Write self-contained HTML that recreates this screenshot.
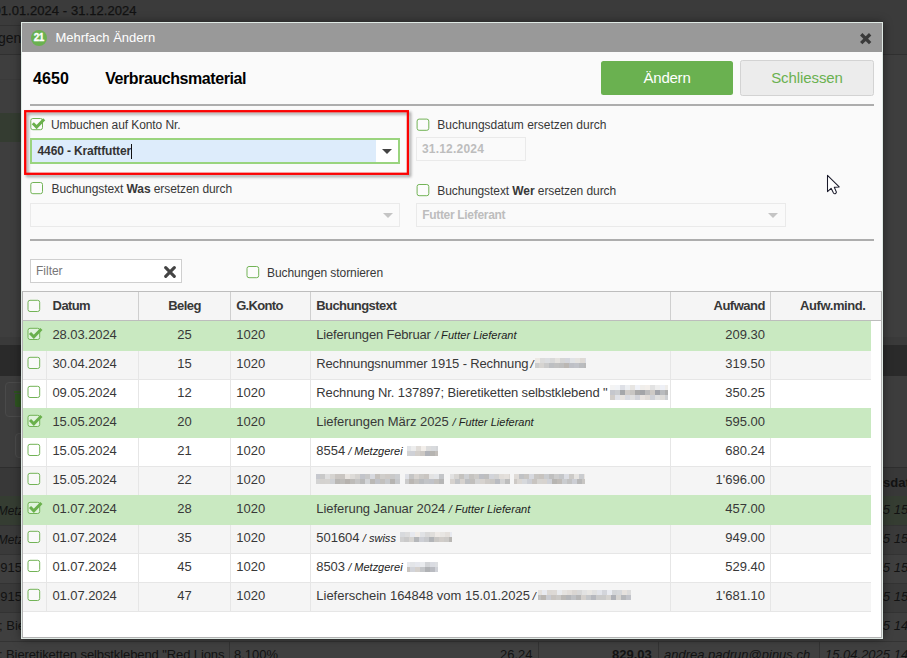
<!DOCTYPE html>
<html lang="de">
<head>
<meta charset="utf-8">
<title>Mehrfach Ändern</title>
<style>
*{box-sizing:border-box;margin:0;padding:0}
html,body{width:907px;height:658px;overflow:hidden}
body{position:relative;background:#3e3e3e;font-family:"Liberation Sans",Arial,sans-serif;font-size:13px;color:#333}
.abs{position:absolute}
/* ---------- darkened page behind ---------- */
.bg{position:absolute;left:0;top:0;width:907px;height:658px;background:#3e3e3e;overflow:hidden;color:#121212}
.bg .band{position:absolute;left:0;width:907px}
.bg .t{position:absolute;white-space:nowrap}
/* ---------- dialog ---------- */
.dlg{position:absolute;left:21px;top:22px;width:862px;height:617px;background:#fafafa;border:1px solid #dfe9e4;box-shadow:0 0 9px 0 rgba(0,0,0,.42)}
.tbar{position:absolute;left:0;top:0;width:860px;height:29px;background:#999}
.tbar .ico{position:absolute;left:9px;top:7px;width:16px;height:16px;border-radius:50%;background:#6ab150;color:#fff;font-weight:bold;font-size:10px;line-height:16px;text-align:center;letter-spacing:-.6px;text-indent:-.6px;-webkit-text-stroke:.3px #fff}
.tbar .ttl{position:absolute;left:33.4px;top:0;line-height:29px;font-size:13px;color:#fff}
.tbar .x{position:absolute;left:836.5px;top:8.5px;width:13.4px;height:13.4px}
.h1{position:absolute;top:46px;font-size:16px;font-weight:bold;color:#111;line-height:20px;white-space:nowrap}
.btn{position:absolute;top:38px;height:35px;width:133px;border-radius:2.5px;font-size:15px;line-height:34px;text-align:center}
.btn.g{left:579px;width:132px;height:34px;background:#6ab150;color:#fff}
.btn.w{left:718px;top:37px;width:134px;height:36px;background:#ececec;color:#6ab150;border:1px solid #d3d3d3}
.hr{position:absolute;left:8px;width:844px;height:2px;background:#adadad}
.cbs{position:absolute;overflow:visible}
.lbl{position:absolute;line-height:16px;white-space:nowrap;color:#383838}
.red{position:absolute;left:2px;top:87px;width:385px;height:65px;filter:drop-shadow(2px 2px 1.6px rgba(0,0,0,.4))}
.inp{position:absolute;height:26px;border:1px solid #eaeaea;background:#fafafa;color:#bdbdbd;font-weight:bold;line-height:24px;padding-left:5px;white-space:nowrap}
.arr{position:absolute;width:0;height:0;border-left:5px solid transparent;border-right:5px solid transparent;border-top:5px solid #c4c4c4}
/* ---------- table ---------- */
.thead{position:absolute;left:0;top:268px;width:860px;height:30px;background:#f5f5f5;border-top:1px solid #bdbdbd;border-bottom:1px solid #bdbdbd;border-left:1px solid #b2b2b2;border-right:1px solid #b2b2b2;font-weight:bold}
.tframe{position:absolute;left:0;top:268px;width:860px;height:347px;background:#fff;border:1px solid #b2b2b2}
.thead .c{position:absolute;top:0;height:28px;line-height:27px;border-right:1px solid #cfcfcf;white-space:nowrap}
.rows{z-index:0;position:absolute;left:1px;top:298px;width:848px;height:291px;background:#fff}
.r{position:absolute;left:0;width:848px;height:29px;border-top:1px solid #e6e6e6;line-height:28px;white-space:nowrap}
.r.alt{background:#f5f5f5}
.r.sel{background:#c9e9c1;border-top:0;height:30px;z-index:2}
.rend{position:absolute;left:0;top:290px;width:848px;height:1px;background:#e6e6e6}
.r .c{position:absolute;top:0;height:28px;overflow:hidden}
.vl{position:absolute;top:0;width:1px;height:291px;background:#e6e6e6;z-index:1}
.r.sel .m{position:absolute;top:0;width:1px;height:29px;background:#c9e9c1}
i.s{font-size:11px;color:#222}
.blur{position:absolute;height:10px;background:#cfcfcf;filter:blur(1px);opacity:.85}
</style>
</head>
<body>
<div class="bg" id="bg">
  <div class="band" style="top:0;height:54px;background:#3b3b3b"></div>
  <div class="band" style="top:25px;height:1px;background:#313131;width:30px"></div>
  <div class="band" style="top:54px;height:1px;background:#303030"></div>
  <div class="band" style="top:79px;height:1px;background:#3a3a3a;width:30px"></div>
  <div class="band" style="top:113px;height:29px;background:#343c31;width:30px"></div>
  <div class="band" style="top:337px;height:8px;background:#3a3a3a"></div>
  <div class="band" style="top:345px;height:31px;background:#2a2a2a"></div>
  <div class="band" style="top:376px;height:91px;background:#3d3d3d"></div>
  <div class="abs" style="left:5px;top:382px;width:40px;height:35px;border:1px solid #4a4a4a;border-radius:4px;background:#3f3f3f"></div>
  <div class="abs" style="left:15px;top:394px;width:11px;height:13px;background:#2e5420;border-radius:0 0 2px 2px"></div><div class="abs" style="left:14px;top:391px;width:13px;height:2px;background:#2e5420"></div>
  <div class="abs" style="left:15px;top:433px;width:40px;height:25px;border:1px solid #4a4a4a;border-radius:4px;background:#404040"></div>
  <div class="band" style="top:467px;height:1px;background:#2e2e2e"></div>
  <div class="band" style="top:468px;height:28px;background:#383838"></div>
  <div class="band" style="top:496px;height:29px;background:#353d32"></div>
  <div class="band" style="top:525px;height:29px;background:#3a3a3a"></div>
  <div class="band" style="top:554px;height:29px;background:#3f3f3f"></div>
  <div class="band" style="top:583px;height:29px;background:#3a3a3a"></div>
  <div class="band" style="top:612px;height:29px;background:#3f3f3f"></div>
  <div class="band" style="top:641px;height:17px;background:#404040"></div>
  <div class="band" style="top:525px;height:1px;background:#333"></div>
  <div class="band" style="top:554px;height:1px;background:#333"></div>
  <div class="band" style="top:583px;height:1px;background:#333"></div>
  <div class="band" style="top:612px;height:1px;background:#333"></div>
  <div class="band" style="top:641px;height:1px;background:#333"></div>
  <div class="abs" style="left:229px;top:641px;width:1px;height:17px;background:#333"></div>
  <div class="abs" style="left:538px;top:641px;width:1px;height:17px;background:#333"></div>
  <div class="abs" style="left:658px;top:641px;width:1px;height:17px;background:#333"></div>
  <div class="abs" style="left:819px;top:641px;width:1px;height:17px;background:#333"></div>
  <div class="t" style="left:-6.5px;top:3px;font-size:13px;line-height:16px;letter-spacing:.06px;-webkit-text-stroke:.25px #121212">01.01.2024 - 31.12.2024</div>
  <div class="t" style="left:-49.5px;top:30px;font-size:14px;line-height:16px">Buchungen</div>
  <div class="t" style="left:-9px;top:503.5px;font-size:12px;font-style:italic;line-height:14px">/ Metzgerei Meier</div>
  <div class="t" style="left:-9px;top:532.5px;font-size:12px;font-style:italic;line-height:14px">/ Metzgerei Meier</div>
  <div class="t" style="left:-7px;top:560px;font-size:13px;line-height:16px">1915 - Rechnung</div>
  <div class="t" style="left:-7px;top:589px;font-size:13px;line-height:16px">1915 - Rechnung</div>
  <div class="t" style="left:-1px;top:618px;font-size:13px;line-height:16px">; Bieretiketten selbstklebend</div>
  <div class="t" style="left:-1px;top:647px;font-size:13px;line-height:16px;letter-spacing:-.1px">; Bieretiketten selbstklebend "Red Lions</div>
  <div class="t" style="left:234px;top:647px;font-size:13px;line-height:16px">8.100%</div>
  <div class="t" style="left:500px;top:647px;font-size:13px;line-height:16px">26.24</div>
  <div class="t" style="left:612px;top:647px;font-size:13px;line-height:16px;font-weight:bold">829.03</div>
  <div class="t" style="left:664px;top:647px;font-size:13px;line-height:16px;font-style:italic">andrea.padrun@pinus.ch</div>
  <div class="t" style="left:825px;top:647px;font-size:13px;line-height:16px;font-style:italic">15.04.2025 14:</div>
  <div class="t" style="left:825px;top:618px;font-size:13px;line-height:16px;font-style:italic">15.04.2025 14:</div>
  <div class="t" style="left:825px;top:589px;font-size:13px;line-height:16px;font-style:italic">15.04.2025 15:</div>
  <div class="t" style="left:825px;top:560px;font-size:13px;line-height:16px;font-style:italic">15.04.2025 15:</div>
  <div class="t" style="left:825px;top:531px;font-size:13px;line-height:16px;font-style:italic">15.04.2025 15:</div>
  <div class="t" style="left:825px;top:502px;font-size:13px;line-height:16px;font-style:italic">15.04.2025 15:</div>
  <div class="t" style="left:819.5px;top:474.5px;font-size:13px;line-height:16px;font-weight:bold">Erfassungsdatum</div>
</div>
<div class="dlg" id="dlg">
  <div class="tbar">
    <div class="ico">21</div>
    <div class="ttl">Mehrfach Ändern</div>
    <svg class="x" viewBox="0 0 12 12"><path d="M2 2 L10 10 M10 2 L2 10" stroke="#3a3a3a" stroke-width="3" stroke-linecap="butt"/></svg>
  </div>
<!--BODY-->
<div class="lbl" style="left:10.9px;top:45.56px;font:bold 16px 'Liberation Sans',sans-serif;line-height:19px;letter-spacing:0.177px;color:#000">4650</div>
<div class="lbl" style="left:83.2px;top:45.56px;font:bold 16px 'Liberation Sans',sans-serif;line-height:19px;letter-spacing:-0.43px;color:#000">Verbrauchsmaterial</div>
<div class="btn g"><span style="letter-spacing:-0.229px">Ändern</span></div>
<div class="btn w"><span style="letter-spacing:-0.095px">Schliessen</span></div>
<div class="hr" style="top:81px"></div>
<svg class="red" viewBox="0 0 385 65"><rect x="1.2" y="1.2" width="382.7" height="62.6" fill="none" stroke="#fc0202" stroke-width="2.3"/></svg>
<svg class="cbs" style="left:6px;top:92px" width="20" height="18" viewBox="0 0 20 18"><rect x="2.80" y="3.50" width="11.70" height="11.20" rx="2" fill="rgba(255,255,255,.45)" stroke="#72b356" stroke-width="1"/><path d="M4.80 8.20 L8.60 12.00 L16.20 4.20" fill="none" stroke="#6ab04c" stroke-width="3"/></svg>
<div class="lbl" style="left:29px;top:94.64px;font:normal 12px 'Liberation Sans',sans-serif;line-height:15px;letter-spacing:-0.087px">Umbuchen auf Konto Nr.</div>
<div class="inp" style="left:8px;top:115px;width:370px;border:2px solid #9ad47e;background:#fff;color:#333;padding:0"><div style="position:absolute;left:0;top:0;width:344px;height:22px;background:#ddecfb"></div><div class="arr" style="left:350px;top:9px;border-top-color:#444"></div></div>
<div class="lbl" style="left:15.6px;top:120.54px;font:bold 12px 'Liberation Sans',sans-serif;line-height:15px;letter-spacing:-0.146px;color:#333">4460 - Kraftfutter</div>
<div style="position:absolute;left:109.3px;top:121px;width:1px;height:15px;background:#111"></div>
<svg class="cbs" style="left:6px;top:156px" width="20" height="18" viewBox="0 0 20 18"><rect x="2.80" y="3.50" width="11.70" height="11.20" rx="2" fill="rgba(255,255,255,.45)" stroke="#72b356" stroke-width="1"/></svg>
<div class="lbl" style="left:29.5px;top:158.64px;font:normal 12px 'Liberation Sans',sans-serif;line-height:15px;letter-spacing:-0.081px">Buchungstext <b>Was</b> ersetzen durch</div>
<div class="inp" style="left:8px;top:180px;width:370px;height:24px"><div class="arr" style="left:352px;top:9px"></div></div>
<svg class="cbs" style="left:392px;top:92px" width="20" height="18" viewBox="0 0 20 18"><rect x="3.10" y="4.10" width="11.70" height="11.20" rx="2" fill="rgba(255,255,255,.45)" stroke="#72b356" stroke-width="1"/></svg>
<div class="lbl" style="left:415.3px;top:94.64px;font:normal 12px 'Liberation Sans',sans-serif;line-height:15px;letter-spacing:-0.016px">Buchungsdatum ersetzen durch</div>
<div class="inp" style="left:394px;top:114px;width:110px;height:24px"></div>
<div class="lbl" style="left:399.9px;top:118.54px;font:bold 12px 'Liberation Sans',sans-serif;line-height:15px;letter-spacing:0.214px;color:#bdbdbd">31.12.2024</div>
<svg class="cbs" style="left:392px;top:158px" width="20" height="18" viewBox="0 0 20 18"><rect x="3.10" y="3.50" width="11.70" height="11.20" rx="2" fill="rgba(255,255,255,.45)" stroke="#72b356" stroke-width="1"/></svg>
<div class="lbl" style="left:415.3px;top:161.24px;font:normal 12px 'Liberation Sans',sans-serif;line-height:15px;letter-spacing:-0.079px">Buchungstext <b>Wer</b> ersetzen durch</div>
<div class="inp" style="left:394px;top:180px;width:370px;height:24px"><div class="arr" style="left:351px;top:9px"></div></div>
<div class="lbl" style="left:400.2px;top:184.94px;font:bold 12px 'Liberation Sans',sans-serif;line-height:15px;letter-spacing:-0.313px;color:#bdbdbd">Futter Lieferant</div>
<div class="hr" style="top:216px"></div>
<div class="inp" style="left:8px;top:236px;width:152px;height:24px;background:#fff;border-color:#cfcfcf"><svg style="position:absolute;left:133px;top:6px;width:12px;height:12px" viewBox="0 0 12 12"><path d="M1.7 1.7 L10.3 10.3 M10.3 1.7 L1.7 10.3" stroke="#444" stroke-width="3.1" stroke-linecap="round" stroke-linejoin="round"/></svg></div>
<div class="lbl" style="left:14px;top:240.64px;font:normal 12px 'Liberation Sans',sans-serif;line-height:15px;letter-spacing:-0.012px;color:#777">Filter</div>
<svg class="cbs" style="left:222px;top:240px" width="20" height="18" viewBox="0 0 20 18"><rect x="3.00" y="3.50" width="11.70" height="11.20" rx="2" fill="rgba(255,255,255,.45)" stroke="#72b356" stroke-width="1"/></svg>
<div class="lbl" style="left:245px;top:242.64px;font:normal 12px 'Liberation Sans',sans-serif;line-height:15px;letter-spacing:-0.071px">Buchungen stornieren</div>
<div class="tframe"></div>
<div class="thead">
<div class="c" style="left:0px;width:116px"></div>
<div class="c" style="left:116px;width:92px"></div>
<div class="c" style="left:208px;width:80px"></div>
<div class="c" style="left:288px;width:360px"></div>
<div class="c" style="left:648px;width:100px"></div>
<svg class="cbs" style="left:2px;top:4px" width="20" height="18" viewBox="0 0 20 18"><rect x="3.00" y="4.30" width="11.70" height="11.20" rx="2" fill="rgba(255,255,255,.45)" stroke="#72b356" stroke-width="1"/></svg>
</div>
<div class="lbl" style="left:30.6px;top:275.00px;font:bold 13px 'Liberation Sans',sans-serif;line-height:16px;letter-spacing:-0.591px">Datum</div>
<div class="lbl" style="left:146.2px;top:275.00px;font:bold 13px 'Liberation Sans',sans-serif;line-height:16px;letter-spacing:-0.561px">Beleg</div>
<div class="lbl" style="left:214.2px;top:275.00px;font:bold 13px 'Liberation Sans',sans-serif;line-height:16px;letter-spacing:-0.681px">G.Konto</div>
<div class="lbl" style="left:294.2px;top:275.00px;font:bold 13px 'Liberation Sans',sans-serif;line-height:16px;letter-spacing:-0.556px">Buchungstext</div>
<div class="lbl" style="left:691.5px;top:275.00px;font:bold 13px 'Liberation Sans',sans-serif;line-height:16px;letter-spacing:-0.484px">Aufwand</div>
<div class="lbl" style="left:778.1px;top:275.00px;font:bold 13px 'Liberation Sans',sans-serif;line-height:16px;letter-spacing:-0.408px">Aufw.mind.</div>
<div class="rows">
<div class="vl" style="left:23px"></div>
<div class="vl" style="left:115px"></div>
<div class="vl" style="left:207px"></div>
<div class="vl" style="left:287px"></div>
<div class="vl" style="left:647px"></div>
<div class="vl" style="left:747px"></div>
<div class="r sel" style="top:0px">
<svg class="cbs" style="left:2px;top:3px" width="20" height="18" viewBox="0 0 20 18"><rect x="3.00" y="4.30" width="11.70" height="11.20" rx="2" fill="rgba(255,255,255,.45)" stroke="#72b356" stroke-width="1"/><path d="M5.00 9.00 L8.80 12.80 L16.40 5.00" fill="none" stroke="#6ab04c" stroke-width="3"/></svg>
</div>
<div class="r alt" style="top:29px">
<svg class="cbs" style="left:2px;top:2px" width="20" height="18" viewBox="0 0 20 18"><rect x="3.00" y="4.30" width="11.70" height="11.20" rx="2" fill="rgba(255,255,255,.45)" stroke="#72b356" stroke-width="1"/></svg>
</div>
<div class="r" style="top:58px">
<svg class="cbs" style="left:2px;top:2px" width="20" height="18" viewBox="0 0 20 18"><rect x="3.00" y="4.30" width="11.70" height="11.20" rx="2" fill="rgba(255,255,255,.45)" stroke="#72b356" stroke-width="1"/></svg>
</div>
<div class="r sel" style="top:87px">
<svg class="cbs" style="left:2px;top:3px" width="20" height="18" viewBox="0 0 20 18"><rect x="3.00" y="4.30" width="11.70" height="11.20" rx="2" fill="rgba(255,255,255,.45)" stroke="#72b356" stroke-width="1"/><path d="M5.00 9.00 L8.80 12.80 L16.40 5.00" fill="none" stroke="#6ab04c" stroke-width="3"/></svg>
</div>
<div class="r" style="top:116px">
<svg class="cbs" style="left:2px;top:2px" width="20" height="18" viewBox="0 0 20 18"><rect x="3.00" y="4.30" width="11.70" height="11.20" rx="2" fill="rgba(255,255,255,.45)" stroke="#72b356" stroke-width="1"/></svg>
</div>
<div class="r alt" style="top:145px">
<svg class="cbs" style="left:2px;top:2px" width="20" height="18" viewBox="0 0 20 18"><rect x="3.00" y="4.30" width="11.70" height="11.20" rx="2" fill="rgba(255,255,255,.45)" stroke="#72b356" stroke-width="1"/></svg>
</div>
<div class="r sel" style="top:174px">
<svg class="cbs" style="left:2px;top:3px" width="20" height="18" viewBox="0 0 20 18"><rect x="3.00" y="4.30" width="11.70" height="11.20" rx="2" fill="rgba(255,255,255,.45)" stroke="#72b356" stroke-width="1"/><path d="M5.00 9.00 L8.80 12.80 L16.40 5.00" fill="none" stroke="#6ab04c" stroke-width="3"/></svg>
</div>
<div class="r alt" style="top:203px">
<svg class="cbs" style="left:2px;top:2px" width="20" height="18" viewBox="0 0 20 18"><rect x="3.00" y="4.30" width="11.70" height="11.20" rx="2" fill="rgba(255,255,255,.45)" stroke="#72b356" stroke-width="1"/></svg>
</div>
<div class="r" style="top:232px">
<svg class="cbs" style="left:2px;top:2px" width="20" height="18" viewBox="0 0 20 18"><rect x="3.00" y="4.30" width="11.70" height="11.20" rx="2" fill="rgba(255,255,255,.45)" stroke="#72b356" stroke-width="1"/></svg>
</div>
<div class="r alt" style="top:261px">
<svg class="cbs" style="left:2px;top:2px" width="20" height="18" viewBox="0 0 20 18"><rect x="3.00" y="4.30" width="11.70" height="11.20" rx="2" fill="rgba(255,255,255,.45)" stroke="#72b356" stroke-width="1"/></svg>
</div>
<div class="rend"></div>
</div>
<div class="lbl" style="left:30.4px;top:304.40px;font:normal 13px 'Liberation Sans',sans-serif;line-height:16px;letter-spacing:-0.068px">28.03.2024</div>
<div class="lbl" style="left:155.27px;top:304.40px;font:normal 13px 'Liberation Sans',sans-serif;line-height:16px;letter-spacing:0px">25</div>
<div class="lbl" style="left:214.2px;top:304.40px;font:normal 13px 'Liberation Sans',sans-serif;line-height:16px;letter-spacing:0px">1020</div>
<div class="lbl" style="left:294.3px;top:304.40px;font:normal 13px 'Liberation Sans',sans-serif;line-height:16px;letter-spacing:-0.18px">Lieferungen Februar</div>
<div class="lbl" style="left:412.9px;top:305.39px;font:normal 11px 'Liberation Sans',sans-serif;line-height:14px;letter-spacing:0.055px;color:#222;font-style:italic">/ Futter Lieferant</div>
<div class="lbl" style="left:703.23px;top:304.40px;font:normal 13px 'Liberation Sans',sans-serif;line-height:16px;letter-spacing:0px">209.30</div>
<div class="lbl" style="left:30.4px;top:333.40px;font:normal 13px 'Liberation Sans',sans-serif;line-height:16px;letter-spacing:-0.068px">30.04.2024</div>
<div class="lbl" style="left:155.27px;top:333.40px;font:normal 13px 'Liberation Sans',sans-serif;line-height:16px;letter-spacing:0px">15</div>
<div class="lbl" style="left:214.2px;top:333.40px;font:normal 13px 'Liberation Sans',sans-serif;line-height:16px;letter-spacing:0px">1020</div>
<div class="lbl" style="left:294.3px;top:333.40px;font:normal 13px 'Liberation Sans',sans-serif;line-height:16px;letter-spacing:-0.155px">Rechnungsnummer 1915 - Rechnung</div>
<div class="lbl" style="left:508.5px;top:334.39px;font:normal 11px 'Liberation Sans',sans-serif;line-height:14px;letter-spacing:0px;color:#222;font-style:italic">/</div>
<div class="lbl" style="left:703.23px;top:333.40px;font:normal 13px 'Liberation Sans',sans-serif;line-height:16px;letter-spacing:0px">319.50</div>
<svg style="position:absolute;left:513px;top:335px" width="51" height="10" viewBox="0 0 51 10" shape-rendering="crispEdges"><rect x="0" y="0" width="5" height="5" fill="#ede9e5"/><rect x="5" y="0" width="5" height="5" fill="#dcdcdc"/><rect x="10" y="0" width="5" height="5" fill="#dcdee1"/><rect x="15" y="0" width="5" height="5" fill="#d9d9d9"/><rect x="20" y="0" width="5" height="5" fill="#e4e2df"/><rect x="25" y="0" width="5" height="5" fill="#d6d6d6"/><rect x="30" y="0" width="5" height="5" fill="#d4d6dc"/><rect x="35" y="0" width="5" height="5" fill="#e1e3e6"/><rect x="40" y="0" width="5" height="5" fill="#e5e3e0"/><rect x="45" y="0" width="5" height="5" fill="#dedad6"/><rect x="50" y="0" width="1" height="5" fill="#dadce2"/><rect x="0" y="5" width="4" height="5" fill="#cdcdcd"/><rect x="4" y="5" width="5" height="5" fill="#d6d4d1"/><rect x="9" y="5" width="5" height="5" fill="#cbcbcb"/><rect x="14" y="5" width="5" height="5" fill="#bdbfc2"/><rect x="19" y="5" width="5" height="5" fill="#c1c1c1"/><rect x="24" y="5" width="5" height="5" fill="#bebebe"/><rect x="29" y="5" width="5" height="5" fill="#bbb7b3"/><rect x="34" y="5" width="5" height="5" fill="#bec0c6"/><rect x="39" y="5" width="5" height="5" fill="#c1c3c9"/><rect x="44" y="5" width="5" height="5" fill="#babcbf"/><rect x="49" y="5" width="2" height="5" fill="#b9b9b9"/></svg>
<div class="lbl" style="left:30.4px;top:362.40px;font:normal 13px 'Liberation Sans',sans-serif;line-height:16px;letter-spacing:-0.068px">09.05.2024</div>
<div class="lbl" style="left:155.27px;top:362.40px;font:normal 13px 'Liberation Sans',sans-serif;line-height:16px;letter-spacing:0px">12</div>
<div class="lbl" style="left:214.2px;top:362.40px;font:normal 13px 'Liberation Sans',sans-serif;line-height:16px;letter-spacing:0px">1020</div>
<div class="lbl" style="left:294.3px;top:362.40px;font:normal 13px 'Liberation Sans',sans-serif;line-height:16px;letter-spacing:-0.122px">Rechnung Nr. 137897; Bieretiketten selbstklebend &quot;</div>
<div class="lbl" style="left:703.23px;top:362.40px;font:normal 13px 'Liberation Sans',sans-serif;line-height:16px;letter-spacing:0px">350.25</div>
<svg style="position:absolute;left:588px;top:362px" width="58" height="15" viewBox="0 0 58 15" shape-rendering="crispEdges"><rect x="0" y="0" width="5" height="5" fill="#f4f4f4"/><rect x="5" y="0" width="5" height="5" fill="#f2f4f7"/><rect x="10" y="0" width="5" height="5" fill="#dee0e6"/><rect x="15" y="0" width="5" height="5" fill="#edeff2"/><rect x="20" y="0" width="5" height="5" fill="#e7e5e2"/><rect x="25" y="0" width="5" height="5" fill="#f0f2f8"/><rect x="30" y="0" width="5" height="5" fill="#f0eeeb"/><rect x="35" y="0" width="5" height="5" fill="#f3efeb"/><rect x="40" y="0" width="5" height="5" fill="#e2e2e2"/><rect x="45" y="0" width="5" height="5" fill="#eeeeee"/><rect x="50" y="0" width="5" height="5" fill="#eef0f6"/><rect x="55" y="0" width="3" height="5" fill="#efedea"/><rect x="0" y="5" width="5" height="5" fill="#c5c7cd"/><rect x="5" y="5" width="5" height="5" fill="#cbcdd0"/><rect x="10" y="5" width="5" height="5" fill="#a5a7aa"/><rect x="15" y="5" width="5" height="5" fill="#d0ccc8"/><rect x="20" y="5" width="5" height="5" fill="#c8c6c3"/><rect x="25" y="5" width="5" height="5" fill="#a9a9a9"/><rect x="30" y="5" width="5" height="5" fill="#a3a5a8"/><rect x="35" y="5" width="5" height="5" fill="#bcbcbc"/><rect x="40" y="5" width="5" height="5" fill="#cecac6"/><rect x="45" y="5" width="5" height="5" fill="#a2a4aa"/><rect x="50" y="5" width="5" height="5" fill="#b9bbbe"/><rect x="55" y="5" width="3" height="5" fill="#afafaf"/><rect x="0" y="10" width="5" height="5" fill="#d1cdc9"/><rect x="5" y="10" width="5" height="5" fill="#e0e2e8"/><rect x="10" y="10" width="5" height="5" fill="#e7e3df"/><rect x="15" y="10" width="5" height="5" fill="#d9dbe1"/><rect x="20" y="10" width="5" height="5" fill="#e0e0e0"/><rect x="25" y="10" width="5" height="5" fill="#d2d4da"/><rect x="30" y="10" width="5" height="5" fill="#e7e3df"/><rect x="35" y="10" width="5" height="5" fill="#e0dcd8"/><rect x="40" y="10" width="5" height="5" fill="#cfd1d7"/><rect x="45" y="10" width="5" height="5" fill="#e0e0e0"/><rect x="50" y="10" width="5" height="5" fill="#dedcd9"/><rect x="55" y="10" width="3" height="5" fill="#ced0d3"/></svg>
<div class="lbl" style="left:30.4px;top:391.40px;font:normal 13px 'Liberation Sans',sans-serif;line-height:16px;letter-spacing:-0.068px">15.05.2024</div>
<div class="lbl" style="left:155.27px;top:391.40px;font:normal 13px 'Liberation Sans',sans-serif;line-height:16px;letter-spacing:0px">20</div>
<div class="lbl" style="left:214.2px;top:391.40px;font:normal 13px 'Liberation Sans',sans-serif;line-height:16px;letter-spacing:0px">1020</div>
<div class="lbl" style="left:294.3px;top:391.40px;font:normal 13px 'Liberation Sans',sans-serif;line-height:16px;letter-spacing:-0.062px">Lieferungen März 2025</div>
<div class="lbl" style="left:430.5px;top:392.39px;font:normal 11px 'Liberation Sans',sans-serif;line-height:14px;letter-spacing:0.027px;color:#222;font-style:italic">/ Futter Lieferant</div>
<div class="lbl" style="left:703.23px;top:391.40px;font:normal 13px 'Liberation Sans',sans-serif;line-height:16px;letter-spacing:0px">595.00</div>
<div class="lbl" style="left:30.4px;top:420.40px;font:normal 13px 'Liberation Sans',sans-serif;line-height:16px;letter-spacing:-0.068px">15.05.2024</div>
<div class="lbl" style="left:155.27px;top:420.40px;font:normal 13px 'Liberation Sans',sans-serif;line-height:16px;letter-spacing:0px">21</div>
<div class="lbl" style="left:214.2px;top:420.40px;font:normal 13px 'Liberation Sans',sans-serif;line-height:16px;letter-spacing:0px">1020</div>
<div class="lbl" style="left:294.3px;top:420.40px;font:normal 13px 'Liberation Sans',sans-serif;line-height:16px;letter-spacing:-0.005px">8554</div>
<div class="lbl" style="left:326.2px;top:421.39px;font:normal 11px 'Liberation Sans',sans-serif;line-height:14px;letter-spacing:-0.002px;color:#222;font-style:italic">/ Metzgerei</div>
<div class="lbl" style="left:703.23px;top:420.40px;font:normal 13px 'Liberation Sans',sans-serif;line-height:16px;letter-spacing:0px">680.24</div>
<svg style="position:absolute;left:385px;top:423px" width="31" height="10" viewBox="0 0 31 10" shape-rendering="crispEdges"><rect x="0" y="0" width="4" height="5" fill="#e2e4e7"/><rect x="4" y="0" width="5" height="5" fill="#ededed"/><rect x="9" y="0" width="5" height="5" fill="#e0dcd8"/><rect x="14" y="0" width="5" height="5" fill="#f2eeea"/><rect x="19" y="0" width="5" height="5" fill="#dcdcdc"/><rect x="24" y="0" width="5" height="5" fill="#d8dadd"/><rect x="29" y="0" width="2" height="5" fill="#d3d5d8"/><rect x="0" y="5" width="3" height="5" fill="#d2d2d2"/><rect x="3" y="5" width="5" height="5" fill="#cfd1d7"/><rect x="8" y="5" width="5" height="5" fill="#d3cfcb"/><rect x="13" y="5" width="5" height="5" fill="#ccc8c4"/><rect x="18" y="5" width="5" height="5" fill="#b0b2b8"/><rect x="23" y="5" width="5" height="5" fill="#b6b4b1"/><rect x="28" y="5" width="3" height="5" fill="#c2beba"/></svg>
<div class="lbl" style="left:30.4px;top:449.40px;font:normal 13px 'Liberation Sans',sans-serif;line-height:16px;letter-spacing:-0.068px">15.05.2024</div>
<div class="lbl" style="left:155.27px;top:449.40px;font:normal 13px 'Liberation Sans',sans-serif;line-height:16px;letter-spacing:0px">22</div>
<div class="lbl" style="left:214.2px;top:449.40px;font:normal 13px 'Liberation Sans',sans-serif;line-height:16px;letter-spacing:0px">1020</div>
<div class="lbl" style="left:693.52px;top:449.40px;font:normal 13px 'Liberation Sans',sans-serif;line-height:16px;letter-spacing:0px">1'696.00</div>
<svg style="position:absolute;left:294px;top:451px" width="84" height="10" viewBox="0 0 84 10" shape-rendering="crispEdges"><rect x="0" y="0" width="4" height="5" fill="#c6c8ce"/><rect x="4" y="0" width="5" height="5" fill="#c9c9c9"/><rect x="9" y="0" width="5" height="5" fill="#dfdfdf"/><rect x="14" y="0" width="5" height="5" fill="#d6d4d1"/><rect x="19" y="0" width="5" height="5" fill="#cac6c2"/><rect x="24" y="0" width="5" height="5" fill="#c9c5c1"/><rect x="29" y="0" width="5" height="5" fill="#e8e4e0"/><rect x="34" y="0" width="5" height="5" fill="#dddbd8"/><rect x="39" y="0" width="5" height="5" fill="#d5d3d0"/><rect x="44" y="0" width="5" height="5" fill="#c2c4ca"/><rect x="49" y="0" width="5" height="5" fill="#c8c8c8"/><rect x="54" y="0" width="5" height="5" fill="#d7d9df"/><rect x="59" y="0" width="5" height="5" fill="#c5c1bd"/><rect x="64" y="0" width="5" height="5" fill="#d0cecb"/><rect x="69" y="0" width="5" height="5" fill="#cecac6"/><rect x="74" y="0" width="5" height="5" fill="#c9c9c9"/><rect x="79" y="0" width="5" height="5" fill="#cbcdd0"/><rect x="0" y="5" width="4" height="5" fill="#d3d3d3"/><rect x="4" y="5" width="5" height="5" fill="#d4d2cf"/><rect x="9" y="5" width="5" height="5" fill="#d5d3d0"/><rect x="14" y="5" width="5" height="5" fill="#ced0d3"/><rect x="19" y="5" width="5" height="5" fill="#b9b7b4"/><rect x="24" y="5" width="5" height="5" fill="#bebcb9"/><rect x="29" y="5" width="5" height="5" fill="#b6b2ae"/><rect x="34" y="5" width="5" height="5" fill="#bdbbb8"/><rect x="39" y="5" width="5" height="5" fill="#c5c5c5"/><rect x="44" y="5" width="5" height="5" fill="#bababa"/><rect x="49" y="5" width="5" height="5" fill="#d3d5d8"/><rect x="54" y="5" width="5" height="5" fill="#bab8b5"/><rect x="59" y="5" width="5" height="5" fill="#c0c2c8"/><rect x="64" y="5" width="5" height="5" fill="#c2c0bd"/><rect x="69" y="5" width="5" height="5" fill="#c7c9cc"/><rect x="74" y="5" width="5" height="5" fill="#b6b4b1"/><rect x="79" y="5" width="5" height="5" fill="#c6c8cb"/></svg>
<svg style="position:absolute;left:383px;top:451px" width="39" height="10" viewBox="0 0 39 10" shape-rendering="crispEdges"><rect x="0" y="0" width="4" height="5" fill="#dee0e6"/><rect x="4" y="0" width="5" height="5" fill="#c5c5c5"/><rect x="9" y="0" width="5" height="5" fill="#d8d4d0"/><rect x="14" y="0" width="5" height="5" fill="#cccac7"/><rect x="19" y="0" width="5" height="5" fill="#c9c5c1"/><rect x="24" y="0" width="5" height="5" fill="#e3e3e3"/><rect x="29" y="0" width="5" height="5" fill="#e3e5e8"/><rect x="34" y="0" width="5" height="5" fill="#c3c5c8"/><rect x="0" y="5" width="4" height="5" fill="#cbcbcb"/><rect x="4" y="5" width="5" height="5" fill="#bab6b2"/><rect x="9" y="5" width="5" height="5" fill="#c3c1be"/><rect x="14" y="5" width="5" height="5" fill="#babcbf"/><rect x="19" y="5" width="5" height="5" fill="#c2c4c7"/><rect x="24" y="5" width="5" height="5" fill="#c0c2c8"/><rect x="29" y="5" width="5" height="5" fill="#c2c0bd"/><rect x="34" y="5" width="5" height="5" fill="#b6b6b6"/></svg>
<svg style="position:absolute;left:428px;top:451px" width="60" height="10" viewBox="0 0 60 10" shape-rendering="crispEdges"><rect x="0" y="0" width="4" height="5" fill="#e2e2e2"/><rect x="4" y="0" width="5" height="5" fill="#d7d5d2"/><rect x="9" y="0" width="5" height="5" fill="#c4c2bf"/><rect x="14" y="0" width="5" height="5" fill="#ced0d3"/><rect x="19" y="0" width="5" height="5" fill="#c5c3c0"/><rect x="24" y="0" width="5" height="5" fill="#cdcbc8"/><rect x="29" y="0" width="5" height="5" fill="#bcbec4"/><rect x="34" y="0" width="5" height="5" fill="#bebebe"/><rect x="39" y="0" width="5" height="5" fill="#d2d4da"/><rect x="44" y="0" width="5" height="5" fill="#d3d3d3"/><rect x="49" y="0" width="5" height="5" fill="#e1ddd9"/><rect x="54" y="0" width="5" height="5" fill="#e4e0dc"/><rect x="59" y="0" width="1" height="5" fill="#dbd7d3"/><rect x="0" y="5" width="5" height="5" fill="#d6d2ce"/><rect x="5" y="5" width="5" height="5" fill="#c1c3c6"/><rect x="10" y="5" width="5" height="5" fill="#d6d2ce"/><rect x="15" y="5" width="5" height="5" fill="#bdbfc2"/><rect x="20" y="5" width="5" height="5" fill="#c1bfbc"/><rect x="25" y="5" width="5" height="5" fill="#d4d4d4"/><rect x="30" y="5" width="5" height="5" fill="#d7d3cf"/><rect x="35" y="5" width="5" height="5" fill="#cecac6"/><rect x="40" y="5" width="5" height="5" fill="#c9c7c4"/><rect x="45" y="5" width="5" height="5" fill="#b9bbc1"/><rect x="50" y="5" width="5" height="5" fill="#d3d3d3"/><rect x="55" y="5" width="5" height="5" fill="#bdbdbd"/></svg>
<svg style="position:absolute;left:492px;top:451px" width="71" height="10" viewBox="0 0 71 10" shape-rendering="crispEdges"><rect x="0" y="0" width="5" height="5" fill="#dfdbd7"/><rect x="5" y="0" width="5" height="5" fill="#c0c2c5"/><rect x="10" y="0" width="5" height="5" fill="#c8c6c3"/><rect x="15" y="0" width="5" height="5" fill="#d7d9df"/><rect x="20" y="0" width="5" height="5" fill="#c8c6c3"/><rect x="25" y="0" width="5" height="5" fill="#c7c3bf"/><rect x="30" y="0" width="5" height="5" fill="#cacccf"/><rect x="35" y="0" width="5" height="5" fill="#bfbfbf"/><rect x="40" y="0" width="5" height="5" fill="#cccccc"/><rect x="45" y="0" width="5" height="5" fill="#c4c6c9"/><rect x="50" y="0" width="5" height="5" fill="#dbdde3"/><rect x="55" y="0" width="5" height="5" fill="#cccac7"/><rect x="60" y="0" width="5" height="5" fill="#e6e4e1"/><rect x="65" y="0" width="5" height="5" fill="#cacccf"/><rect x="70" y="0" width="1" height="5" fill="#e9e5e1"/><rect x="0" y="5" width="3" height="5" fill="#cdc9c5"/><rect x="3" y="5" width="5" height="5" fill="#dbd7d3"/><rect x="8" y="5" width="5" height="5" fill="#d7d9dc"/><rect x="13" y="5" width="5" height="5" fill="#ccced4"/><rect x="18" y="5" width="5" height="5" fill="#c8c4c0"/><rect x="23" y="5" width="5" height="5" fill="#d6d4d1"/><rect x="28" y="5" width="5" height="5" fill="#d7d3cf"/><rect x="33" y="5" width="5" height="5" fill="#cfd1d7"/><rect x="38" y="5" width="5" height="5" fill="#b7b5b2"/><rect x="43" y="5" width="5" height="5" fill="#bfbbb7"/><rect x="48" y="5" width="5" height="5" fill="#cacccf"/><rect x="53" y="5" width="5" height="5" fill="#c2c2c2"/><rect x="58" y="5" width="5" height="5" fill="#ccced4"/><rect x="63" y="5" width="5" height="5" fill="#b8b8b8"/><rect x="68" y="5" width="3" height="5" fill="#c8c6c3"/></svg>
<div class="lbl" style="left:30.4px;top:478.40px;font:normal 13px 'Liberation Sans',sans-serif;line-height:16px;letter-spacing:-0.068px">01.07.2024</div>
<div class="lbl" style="left:155.27px;top:478.40px;font:normal 13px 'Liberation Sans',sans-serif;line-height:16px;letter-spacing:0px">28</div>
<div class="lbl" style="left:214.2px;top:478.40px;font:normal 13px 'Liberation Sans',sans-serif;line-height:16px;letter-spacing:0px">1020</div>
<div class="lbl" style="left:294.3px;top:478.40px;font:normal 13px 'Liberation Sans',sans-serif;line-height:16px;letter-spacing:-0.053px">Lieferung Januar 2024</div>
<div class="lbl" style="left:426.7px;top:479.39px;font:normal 11px 'Liberation Sans',sans-serif;line-height:14px;letter-spacing:0.055px;color:#222;font-style:italic">/ Futter Lieferant</div>
<div class="lbl" style="left:703.23px;top:478.40px;font:normal 13px 'Liberation Sans',sans-serif;line-height:16px;letter-spacing:0px">457.00</div>
<div class="lbl" style="left:30.4px;top:507.40px;font:normal 13px 'Liberation Sans',sans-serif;line-height:16px;letter-spacing:-0.068px">01.07.2024</div>
<div class="lbl" style="left:155.27px;top:507.40px;font:normal 13px 'Liberation Sans',sans-serif;line-height:16px;letter-spacing:0px">35</div>
<div class="lbl" style="left:214.2px;top:507.40px;font:normal 13px 'Liberation Sans',sans-serif;line-height:16px;letter-spacing:0px">1020</div>
<div class="lbl" style="left:294.3px;top:507.40px;font:normal 13px 'Liberation Sans',sans-serif;line-height:16px;letter-spacing:-0.032px">501604</div>
<div class="lbl" style="left:340.8px;top:508.39px;font:normal 11px 'Liberation Sans',sans-serif;line-height:14px;letter-spacing:0.014px;color:#222;font-style:italic">/ swiss</div>
<div class="lbl" style="left:703.23px;top:507.40px;font:normal 13px 'Liberation Sans',sans-serif;line-height:16px;letter-spacing:0px">949.00</div>
<svg style="position:absolute;left:378px;top:509px" width="52" height="10" viewBox="0 0 52 10" shape-rendering="crispEdges"><rect x="0" y="0" width="5" height="5" fill="#d8dadd"/><rect x="5" y="0" width="5" height="5" fill="#dddddd"/><rect x="10" y="0" width="5" height="5" fill="#e7e9ef"/><rect x="15" y="0" width="5" height="5" fill="#f0ece8"/><rect x="20" y="0" width="5" height="5" fill="#e0e2e5"/><rect x="25" y="0" width="5" height="5" fill="#d9d9d9"/><rect x="30" y="0" width="5" height="5" fill="#e0dedb"/><rect x="35" y="0" width="5" height="5" fill="#eeeae6"/><rect x="40" y="0" width="5" height="5" fill="#e8e6e3"/><rect x="45" y="0" width="5" height="5" fill="#e4e0dc"/><rect x="50" y="0" width="2" height="5" fill="#e8eaf0"/><rect x="0" y="5" width="4" height="5" fill="#d0d0d0"/><rect x="4" y="5" width="5" height="5" fill="#cacaca"/><rect x="9" y="5" width="5" height="5" fill="#d6d4d1"/><rect x="14" y="5" width="5" height="5" fill="#b5b7ba"/><rect x="19" y="5" width="5" height="5" fill="#cdcfd5"/><rect x="24" y="5" width="5" height="5" fill="#c7c9cc"/><rect x="29" y="5" width="5" height="5" fill="#b2b4b7"/><rect x="34" y="5" width="5" height="5" fill="#c9c7c4"/><rect x="39" y="5" width="5" height="5" fill="#d1cdc9"/><rect x="44" y="5" width="5" height="5" fill="#cccac7"/><rect x="49" y="5" width="3" height="5" fill="#b9b7b4"/></svg>
<div class="lbl" style="left:30.4px;top:536.40px;font:normal 13px 'Liberation Sans',sans-serif;line-height:16px;letter-spacing:-0.068px">01.07.2024</div>
<div class="lbl" style="left:155.27px;top:536.40px;font:normal 13px 'Liberation Sans',sans-serif;line-height:16px;letter-spacing:0px">45</div>
<div class="lbl" style="left:214.2px;top:536.40px;font:normal 13px 'Liberation Sans',sans-serif;line-height:16px;letter-spacing:0px">1020</div>
<div class="lbl" style="left:294.3px;top:536.40px;font:normal 13px 'Liberation Sans',sans-serif;line-height:16px;letter-spacing:-0.105px">8503</div>
<div class="lbl" style="left:326.2px;top:537.39px;font:normal 11px 'Liberation Sans',sans-serif;line-height:14px;letter-spacing:-0.002px;color:#222;font-style:italic">/ Metzgerei</div>
<div class="lbl" style="left:703.23px;top:536.40px;font:normal 13px 'Liberation Sans',sans-serif;line-height:16px;letter-spacing:0px">529.40</div>
<svg style="position:absolute;left:385px;top:539px" width="31" height="10" viewBox="0 0 31 10" shape-rendering="crispEdges"><rect x="0" y="0" width="3" height="5" fill="#e8eaed"/><rect x="3" y="0" width="5" height="5" fill="#e3e5e8"/><rect x="8" y="0" width="5" height="5" fill="#e5e7ed"/><rect x="13" y="0" width="5" height="5" fill="#e9ebee"/><rect x="18" y="0" width="5" height="5" fill="#d2d4d7"/><rect x="23" y="0" width="5" height="5" fill="#dadce2"/><rect x="28" y="0" width="3" height="5" fill="#dddfe2"/><rect x="0" y="5" width="3" height="5" fill="#c7c3bf"/><rect x="3" y="5" width="5" height="5" fill="#d2d4da"/><rect x="8" y="5" width="5" height="5" fill="#d5d1cd"/><rect x="13" y="5" width="5" height="5" fill="#c4c6c9"/><rect x="18" y="5" width="5" height="5" fill="#b0b2b5"/><rect x="23" y="5" width="5" height="5" fill="#b9bbc1"/><rect x="28" y="5" width="3" height="5" fill="#d0d2d8"/></svg>
<div class="lbl" style="left:30.4px;top:565.40px;font:normal 13px 'Liberation Sans',sans-serif;line-height:16px;letter-spacing:-0.068px">01.07.2024</div>
<div class="lbl" style="left:155.27px;top:565.40px;font:normal 13px 'Liberation Sans',sans-serif;line-height:16px;letter-spacing:0px">47</div>
<div class="lbl" style="left:214.2px;top:565.40px;font:normal 13px 'Liberation Sans',sans-serif;line-height:16px;letter-spacing:0px">1020</div>
<div class="lbl" style="left:294.3px;top:565.40px;font:normal 13px 'Liberation Sans',sans-serif;line-height:16px;letter-spacing:-0.007px">Lieferschein 164848 vom 15.01.2025</div>
<div class="lbl" style="left:510.8px;top:566.39px;font:normal 11px 'Liberation Sans',sans-serif;line-height:14px;letter-spacing:0px;color:#222;font-style:italic">/</div>
<div class="lbl" style="left:693.52px;top:565.40px;font:normal 13px 'Liberation Sans',sans-serif;line-height:16px;letter-spacing:0px">1'681.10</div>
<svg style="position:absolute;left:516px;top:567px" width="93" height="10" viewBox="0 0 93 10" shape-rendering="crispEdges"><rect x="0" y="0" width="4" height="5" fill="#e5e1dd"/><rect x="4" y="0" width="5" height="5" fill="#e8eaf0"/><rect x="9" y="0" width="5" height="5" fill="#dcd8d4"/><rect x="14" y="0" width="5" height="5" fill="#ddd9d5"/><rect x="19" y="0" width="5" height="5" fill="#e9ebee"/><rect x="24" y="0" width="5" height="5" fill="#e5e3e0"/><rect x="29" y="0" width="5" height="5" fill="#e2deda"/><rect x="34" y="0" width="5" height="5" fill="#dad6d2"/><rect x="39" y="0" width="5" height="5" fill="#d8d8d8"/><rect x="44" y="0" width="5" height="5" fill="#e2e2e2"/><rect x="49" y="0" width="5" height="5" fill="#e8e6e3"/><rect x="54" y="0" width="5" height="5" fill="#e0e0e0"/><rect x="59" y="0" width="5" height="5" fill="#e2e4ea"/><rect x="64" y="0" width="5" height="5" fill="#d3d5db"/><rect x="69" y="0" width="5" height="5" fill="#e9ebf1"/><rect x="74" y="0" width="5" height="5" fill="#d3d5d8"/><rect x="79" y="0" width="5" height="5" fill="#d6d8db"/><rect x="84" y="0" width="5" height="5" fill="#e6e2de"/><rect x="89" y="0" width="4" height="5" fill="#dcdcdc"/><rect x="0" y="5" width="3" height="5" fill="#c1c1c1"/><rect x="3" y="5" width="5" height="5" fill="#bab6b2"/><rect x="8" y="5" width="5" height="5" fill="#caccd2"/><rect x="13" y="5" width="5" height="5" fill="#c8c4c0"/><rect x="18" y="5" width="5" height="5" fill="#cbc9c6"/><rect x="23" y="5" width="5" height="5" fill="#bbb9b6"/><rect x="28" y="5" width="5" height="5" fill="#b4b6b9"/><rect x="33" y="5" width="5" height="5" fill="#bfc1c4"/><rect x="38" y="5" width="5" height="5" fill="#b6b6b6"/><rect x="43" y="5" width="5" height="5" fill="#d4d0cc"/><rect x="48" y="5" width="5" height="5" fill="#c5c7ca"/><rect x="53" y="5" width="5" height="5" fill="#b6b8be"/><rect x="58" y="5" width="5" height="5" fill="#cacaca"/><rect x="63" y="5" width="5" height="5" fill="#cacaca"/><rect x="68" y="5" width="5" height="5" fill="#d5d3d0"/><rect x="73" y="5" width="5" height="5" fill="#afb1b7"/><rect x="78" y="5" width="5" height="5" fill="#d6d4d1"/><rect x="83" y="5" width="5" height="5" fill="#b6b8bb"/><rect x="88" y="5" width="5" height="5" fill="#c1c3c9"/></svg>
<svg style="position:absolute;left:804px;top:151px;width:16px;height:22px" viewBox="0 0 16 22"><path d="M1.5 1.3 L1.5 17.6 L5.1 14.3 L7.5 19.0 Q8.4 20.2 9.6 19.5 Q10.8 18.8 10.2 17.6 L8.3 13.3 L13.2 12.9 Z" fill="#fff" stroke="#1a1a2a" stroke-width="1.05" stroke-linejoin="round"/></svg>
<!--/BODY-->
</div>
</body>
</html>
